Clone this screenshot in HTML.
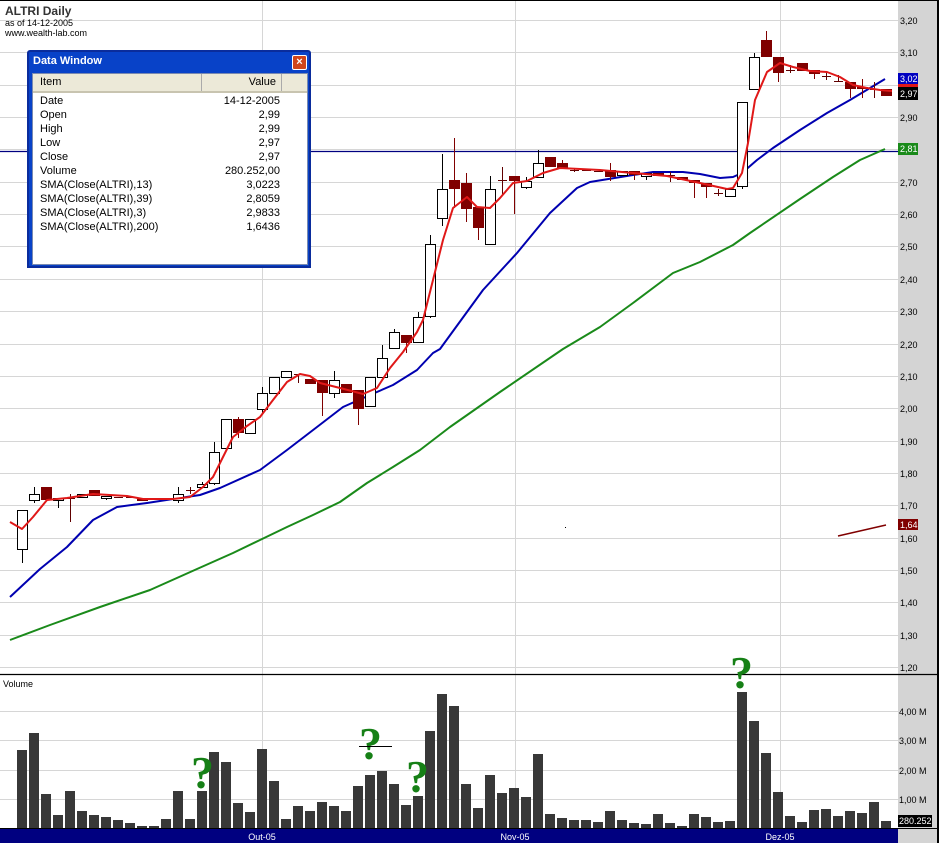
<!DOCTYPE html>
<html><head><meta charset="utf-8">
<style>
body{margin:0;background:#fff;width:939px;height:843px;overflow:hidden;position:relative;font-family:"Liberation Sans",Arial,sans-serif}
svg{position:absolute;left:0;top:0}
.hdr{position:absolute;left:5px;color:#000}
.dw{position:absolute;left:27px;top:50px;width:280px;height:214px;background:#0842c8;border:2px solid #0a2c9c;border-radius:3px 3px 0 0}
.dwt{position:absolute;left:4px;top:3px;color:#fff;font-weight:bold;font-size:11px}
.dwx{position:absolute;left:263px;top:3px;width:13px;height:13px;background:#d0451c;border:1px solid #fff;border-radius:2px;color:#fff;font-size:11px;line-height:12px;text-align:center;font-weight:bold}
.dwi{position:absolute;left:3px;top:21px;width:274px;height:190px;background:#fff;border:1px solid #7a8ab0}
.dwh{position:absolute;left:0;top:0;width:274px;height:17px;background:#ece9d8;border-bottom:2px solid #c8c4b0;font-size:11px}
.row{position:absolute;left:7px;width:240px;font-size:11px;color:#000;height:14px;line-height:14px}
.row b{font-weight:normal;position:absolute;right:0}
.q{position:absolute;color:#168016;font-family:"Liberation Serif",serif;font-weight:bold;font-size:46px;line-height:46px}
</style></head><body>
<svg id="s" width="939" height="843" xmlns="http://www.w3.org/2000/svg"></svg>
<div class="hdr" style="top:4px;font-size:12px;font-weight:bold;color:#333">ALTRI Daily</div>
<div class="hdr" style="top:18px;font-size:9px">as of 14-12-2005</div>
<div class="hdr" style="top:28px;font-size:9px">www.wealth-lab.com</div>
<div class="dw">
<div class="dwt">Data Window</div>
<div class="dwx">×</div>
<div class="dwi">
<div class="dwh"><span style="position:absolute;left:7px;top:2px">Item</span><span style="position:absolute;left:168px;top:0;width:1px;height:17px;background:#aaa"></span><span style="position:absolute;right:31px;top:2px">Value</span><span style="position:absolute;left:248px;top:0;width:1px;height:17px;background:#aaa"></span></div>
<div class="row" style="top:20px">Date<b>14-12-2005</b></div>
<div class="row" style="top:34px">Open<b>2,99</b></div>
<div class="row" style="top:48px">High<b>2,99</b></div>
<div class="row" style="top:62px">Low<b>2,97</b></div>
<div class="row" style="top:76px">Close<b>2,97</b></div>
<div class="row" style="top:90px">Volume<b>280.252,00</b></div>
<div class="row" style="top:104px">SMA(Close(ALTRI),13)<b>3,0223</b></div>
<div class="row" style="top:118px">SMA(Close(ALTRI),39)<b>2,8059</b></div>
<div class="row" style="top:132px">SMA(Close(ALTRI),3)<b>2,9833</b></div>
<div class="row" style="top:146px">SMA(Close(ALTRI),200)<b>1,6436</b></div>
</div></div>
<div class="q" style="left:191px;top:750px">?</div>
<div class="q" style="left:359px;top:721px">?</div>
<div style="position:absolute;left:359px;top:746px;width:33px;height:1px;background:#000"></div>
<div class="q" style="left:406px;top:754px">?</div>
<div class="q" style="left:730px;top:650px">?</div>
<script>
var s=document.getElementById('s'),h='';
function L(x1,y1,x2,y2,c,w){h+='<line x1="'+x1+'" y1="'+y1+'" x2="'+x2+'" y2="'+y2+'" stroke="'+c+'" stroke-width="'+(w||1)+'"/>';}
function R(x,y,w,hh,f,st){h+='<rect x="'+x+'" y="'+y+'" width="'+w+'" height="'+hh+'" fill="'+f+'"'+(st?' stroke="'+st+'"':'')+'/>';}
function T(x,y,t,c,sz,a){h+='<text x="'+x+'" y="'+y+'" fill="'+c+'" font-size="'+(sz||9)+'" font-family="Liberation Sans,Arial,sans-serif"'+(a?' text-anchor="'+a+'"':'')+'>'+t+'</text>';}
var pl=['3,20','3,10','3,00','2,90','2,80','2,70','2,60','2,50','2,40','2,30','2,20','2,10','2,00','1,90','1,80','1,70','1,60','1,50','1,40','1,30','1,20'];
for(var k=0;k<21;k++){var y=Math.round(20+32.35*k)+.5;L(0,y,898,y,'#d6d6d6');}
[711,740,770,799].forEach(function(y){L(0,y+.5,898,y+.5,'#d6d6d6');});
[262,515,780].forEach(function(x){L(x+.5,0,x+.5,829,'#d6d6d6');});
R(898,0,39,843,'#d4d4d4');R(937,0,2,843,'#000');R(0,0,939,1,'#000');
for(k=0;k<21;k++){var y=Math.round(20+32.35*k);if(k!=2)T(900,y+4,pl[k],'#000');}
L(0,151.5,898,151.5,'#000080',1.3);
L(0,674.5,939,674.5,'#000',1.2);
T(3,687,'Volume','#000',9);
var vl=[[711,'4,00 M'],[740,'3,00 M'],[770,'2,00 M'],[799,'1,00 M']];vl.forEach(function(v){T(899,v[0]+4,v[1],'#000');});
var vol=[79,96,35,14,38,18,14,12,9,6,3,3,10,38,10,38,77,67,26,17,80,48,10,23,18,27,23,18,43,54,58,45,24,33,98,135,123,45,21,54,36,41,32,75,15,11,9,9,7,18,9,6,5,15,6,3,15,12,7,8,137,108,76,37,13,7,19,20,13,18,16,27,8];
vol.forEach(function(v,i){R(22+12*i-5,829-v,10,v,'#383838');});
var C=[['W',510,549,510,563],['W',494,500,487,503],['D',487,500],['W',498,500,498,508],['L',498,498,494,522],['W',494,497],['D',490,496],['W',496,498,496,500],['L',497,497],['L',497,497],['D',499,500],['D',498,500],['L',499,499],['W',494,500,487,503],['L',490,490,487,494],['W',484,487,482,487],['W',452,483,442,485],['W',419,448],['D',419,433,417,438],['W',419,433],['W',393,409,387,413],['W',377,393],['W',371,377],['L',374,374,374,383],['D',379,384],['D',380,393,380,416],['W',380,393,371,398],['D',384,393],['D',390,409,390,425],['W',377,406],['W',358,377,345,377],['W',332,348,329,348],['D',335,343,335,353],['W',317,342,312,342],['W',244,316,235,318],['W',189,218,154,226],['D',180,189,138,208],['D',183,209,173,222],['D',207,228,207,240],['W',189,244,176,244],['L',180,180,167,195],['D',176,181,176,214],['W',181,187,177,189],['W',163,177,150,177],['D',157,167],['D',163,168,160,168],['L',170,170,168,172],['L',170,170],['L',171,171],['D',170,177,163,181],['W',171,175],['D',171,175,171,180],['W',173,176,173,180],['D',173,176],['L',175,175,172,182],['D',177,180],['D',180,183,180,198],['D',183,187,183,198],['L',193,193,189,196],['W',189,196],['W',102,186,102,189],['W',57,89,53,89],['D',40,57,31,57],['D',57,73,57,82],['L',70,70,65,73],['D',63,71],['D',70,74,70,79],['L',76,76,72,80],['L',81,81,75,81],['D',82,89,82,98],['D',87,89,79,98],['L',89,89,82,98],['D',89,96]];
function line(p,c,w){h+='<polyline fill="none" stroke="'+c+'" stroke-width="'+w+'" stroke-linejoin="round" points="'+p+'"/>';}
line('10,640 50,625 100,607 150,590 197,569 233,553 260,540 287,527 313,515 340,502 367,483 393,467 420,450 450,427 500,392 563,349 600,327 633,303 673,273 700,262 733,245 750,233 800,199 833,177 860,160 885,149','#1a8a1a',2);
line('10,597 40,569 67,547 93,520 117,507 147,503 173,499 200,495 220,488 260,470 287,450 317,427 343,407 370,395 393,385 417,370 433,353 440,349 483,290 517,253 550,213 577,188 590,182 633,175 653,172 683,172 700,174 720,178 733,177 742,173 757,160 773,148 800,130 827,113 850,100 870,88 885,79','#0000b0',2);
C.forEach(function(c,i){var x=22+12*i,t=c[1],b=c[2],hi=c.length>3?c[3]:t,lo=c.length>3?c[4]:b;
 if(c[0]=='D'){L(x+.5,hi,x+.5,lo,'#800000');R(x-5,t,11,Math.max(b-t,2),'#800000');}
 else if(c[0]=='W'){L(x+.5,hi,x+.5,lo,'#000');R(x-4.5,t+.5,10,b-t,'#fff','#000');}
 else{L(x+.5,hi,x+.5,lo,'#600000');L(x-4,t+.5,x+5,t+.5,'#600000');}});
line('10,522 22,529 33,517 47,500 67,498 93,494 127,496 143,499 173,499 190,497 203,487 213,477 223,457 233,437 247,426 260,417 273,400 287,382 300,374 310,376 320,383 340,388 363,394 377,388 390,368 403,352 417,332 423,320 433,280 443,240 453,208 467,197 477,207 490,208 500,198 513,183 527,181 543,173 560,168 600,170 633,173 667,176 700,183 727,189 733,188 742,173 748,143 755,100 767,72 780,63 793,67 810,71 827,72 840,77 853,85 867,88 880,90 892,91','#e01818',2);
L(838,536,886,525,'#800000',1.5);R(565,527,1,1,'#000');
R(898,73,20,11,'#0000c0');T(900,82,'3,02','#fff');
R(898,84,20,3,'#e01818');R(898,87,20,13,'#000');T(900,97,'2,97','#fff');
R(898,143,20,12,'#1a8a1a');T(900,152,'2,81','#fff');
R(898,519,20,11,'#800000');T(900,528,'1,64','#fff');
R(898,815,34,12,'#000');T(899,824,'280.252','#fff');
R(0,829,898,14,'#000080');
T(262,840,'Out-05','#fff',9,'middle');T(515,840,'Nov-05','#fff',9,'middle');T(780,840,'Dez-05','#fff',9,'middle');
L(0,828.5,939,828.5,'#000');
s.innerHTML=h;
</script>
</body></html>
